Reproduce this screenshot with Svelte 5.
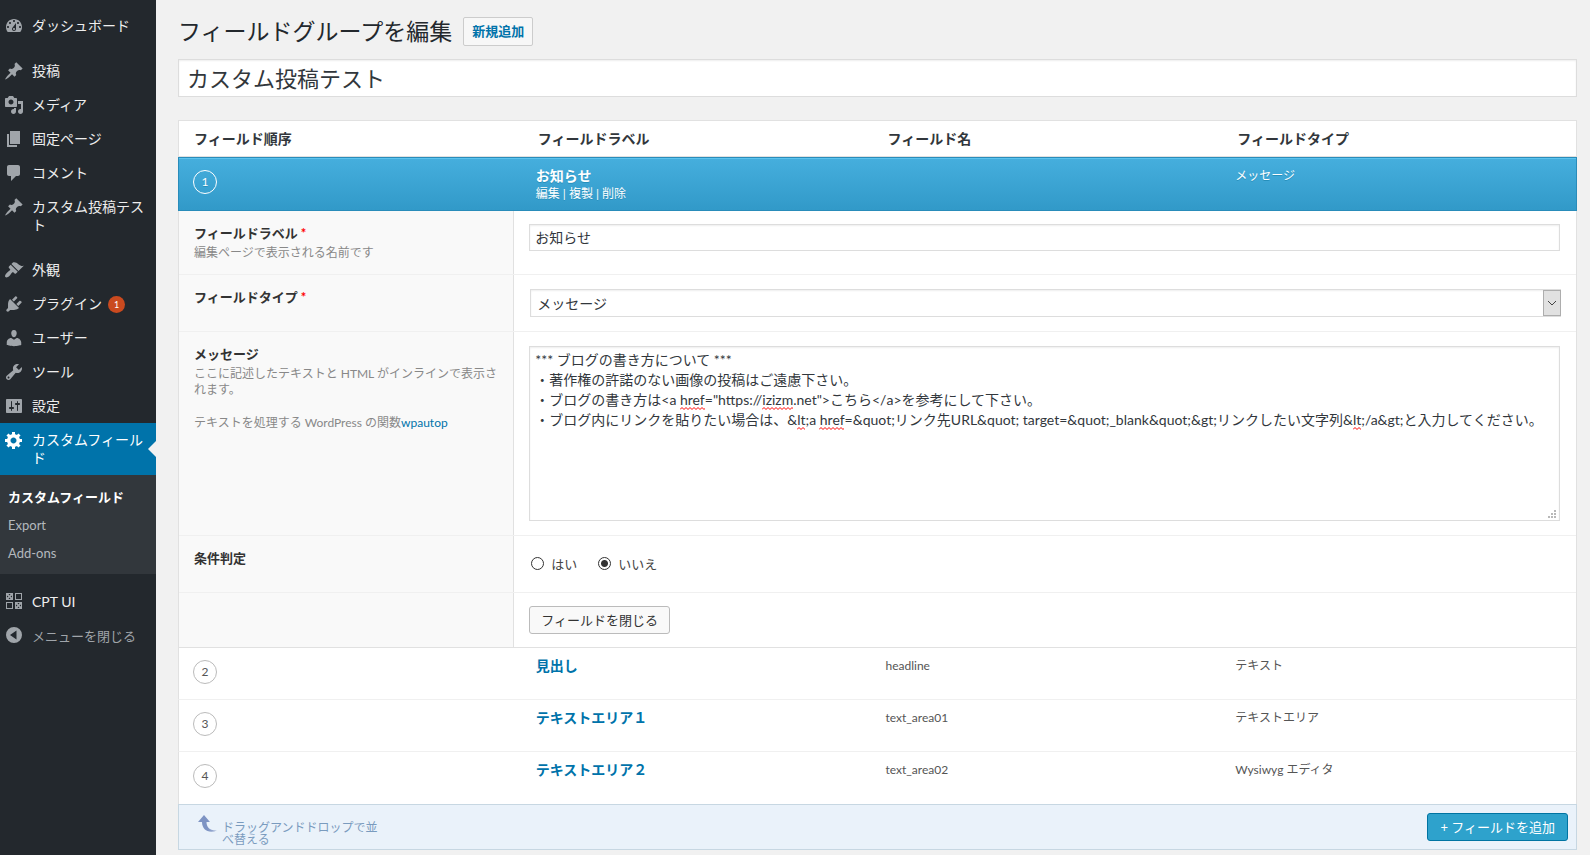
<script lang="ts">
  interface MenuItem {
    label?: string;
    icon?: string;
    badge?: number;
    current?: boolean;
    muted?: boolean;
    separator?: boolean;
  }

  const icons: Record<string, string> = {
    dashboard: 'M3.76 16h12.48c1.1-1.37 1.76-3.11 1.76-5 0-4.42-3.58-8-8-8s-8 3.58-8 8c0 1.89.66 3.63 1.76 5zM10 4c.55 0 1 .45 1 1s-.45 1-1 1-1-.45-1-1 .45-1 1-1zM6 6c.55 0 1 .45 1 1s-.45 1-1 1-1-.45-1-1 .45-1 1-1zm8 0c.55 0 1 .45 1 1s-.45 1-1 1-1-.45-1-1 .45-1 1-1zm-5.37 5.55L12 7v6c0 1.1-.9 2-2 2s-2-.9-2-2c0-.57.24-1.08.63-1.45zM4 10c.55 0 1 .45 1 1s-.45 1-1 1-1-.45-1-1 .45-1 1-1zm12 0c.55 0 1 .45 1 1s-.45 1-1 1-1-.45-1-1 .45-1 1-1zm-5 3c0-.55-.45-1-1-1s-1 .45-1 1 .45 1 1 1 1-.45 1-1z',
    post: 'M10.44 3.02l1.82-1.82 6.36 6.35-1.83 1.82c-1.05-.68-2.48-.57-3.41.36l-.75.75c-.92.93-1.04 2.35-.35 3.41l-1.83 1.82-2.41-2.41-2.8 2.79c-.42.42-3.38 2.71-3.8 2.29s1.86-3.39 2.28-3.81l2.79-2.79L4.1 9.36l1.83-1.82c1.05.69 2.48.57 3.4-.36l.75-.75c.93-.92 1.05-2.35.36-3.41z',
    media: 'M13 11V4c0-.55-.45-1-1-1h-1.67L9 1H5L3.67 3H2c-.55 0-1 .45-1 1v7c0 .55.45 1 1 1h10c.55 0 1-.45 1-1zM7 4.5c1.38 0 2.5 1.12 2.5 2.5S8.38 9.5 7 9.5 4.5 8.38 4.5 7 5.62 4.5 7 4.5zM14 6h5v10.5c0 1.38-1.12 2.5-2.5 2.5S14 17.88 14 16.5s1.12-2.5 2.5-2.5c.17 0 .34.02.5.05V9h-3V6zm-4 8.05V13h2v3.5c0 1.38-1.12 2.5-2.5 2.5S7 17.88 7 16.5 8.12 14 9.5 14c.17 0 .34.02.5.05z',
    page: 'M6 15V2h10v13H6zm-1 1h8v2H3V5h2v11z',
    comments: 'M5 2h9c1.1 0 2 .9 2 2v7c0 1.1-.9 2-2 2h-2l-5 5v-5H5c-1.1 0-2-.9-2-2V4c0-1.1.9-2 2-2z',
    appearance: 'M14.48 11.06L7.41 3.99l1.5-1.5c.5-.56 2.3-.47 3.51.32 1.21.8 1.43 1.28 2.91 2.1 1.18.64 2.45 1.26 4.45.85zm-.71.71L6.7 4.7 4.93 6.47c-.39.39-.39 1.02 0 1.41l1.06 1.06c.39.39.39 1.03 0 1.42-.6.6-1.43 1.11-2.21 1.69-.35.26-.7.53-1.01.84C1.43 14.23.4 16.08 1.4 17.07c.99 1 2.84-.03 4.18-1.36.31-.31.58-.66.85-1.02.57-.78 1.08-1.61 1.69-2.21.39-.39 1.02-.39 1.41 0l1.06 1.06c.39.39 1.02.39 1.41 0z',
    plugins: 'M13.11 4.36L9.87 7.6 8 5.73l3.24-3.24c.35-.34 1.05-.2 1.56.32.52.51.66 1.21.31 1.55zm-8 1.77l.91-1.12 9.01 9.01-1.19.84c-.71.71-2.63 1.16-3.82 1.16H6.14L4.9 17.26c-.59.59-1.54.59-2.12 0-.59-.58-.59-1.53 0-2.12l1.24-1.24v-3.88c0-1.13.4-3.19 1.09-3.89zm7.26 3.97l3.24-3.24c.34-.35 1.04-.21 1.55.31.52.51.66 1.21.31 1.55l-3.24 3.25z',
    users: 'M10 9.25c-2.27 0-2.73-3.44-2.73-3.44C7 4.02 7.82 2 9.97 2c2.16 0 2.98 2.02 2.71 3.81 0 0-.41 3.44-2.68 3.44zm0 2.57L12.72 10c2.39 0 4.52 2.33 4.52 4.53v2.49s-3.65 1.13-7.24 1.13c-3.65 0-7.24-1.13-7.24-1.13v-2.49c0-2.25 1.94-4.48 4.47-4.48z',
    tools: 'M16.68 9.77c-1.34 1.34-3.3 1.67-4.95.99l-5.41 6.52c-.99.99-2.59.99-3.58 0s-.99-2.59 0-3.57l6.52-5.42c-.68-1.65-.35-3.61.99-4.95 1.28-1.28 3.12-1.62 4.72-1.06l-2.89 2.89 2.82 2.82 2.86-2.87c.53 1.58.18 3.39-1.08 4.65zM3.81 16.21c.4.39 1.04.39 1.43 0 .4-.4.4-1.04 0-1.43-.39-.4-1.03-.4-1.43 0-.39.39-.39 1.03 0 1.43z',
    settings: 'M18 16V4c0-.55-.45-1-1-1H3c-.55 0-1 .45-1 1v12c0 .55.45 1 1 1h14c.55 0 1-.45 1-1zM8 11h1c.55 0 1 .45 1 1s-.45 1-1 1H8v1.5c0 .28-.22.5-.5.5s-.5-.22-.5-.5V13H6c-.55 0-1-.45-1-1s.45-1 1-1h1V5.5c0-.28.22-.5.5-.5s.5.22.5.5V11zm5-2h-1c-.55 0-1-.45-1-1s.45-1 1-1h1V5.5c0-.28.22-.5.5-.5s.5.22.5.5V7h1c.55 0 1 .45 1 1s-.45 1-1 1h-1v5.5c0 .28-.22.5-.5.5s-.5-.22-.5-.5V9z',
    generic: 'M18 12h-2.18c-.17.7-.44 1.35-.81 1.93l1.54 1.54-2.1 2.1-1.54-1.54c-.58.36-1.23.63-1.91.79V19H8v-2.18c-.68-.16-1.33-.43-1.91-.79l-1.54 1.54-2.12-2.12 1.54-1.54c-.36-.58-.63-1.23-.79-1.91H1V9.03h2.17c.16-.7.44-1.35.8-1.94L2.43 5.55l2.1-2.1 1.54 1.54c.58-.37 1.24-.64 1.93-.81V2h3v2.18c.68.16 1.33.43 1.91.79l1.54-1.54 2.12 2.12-1.54 1.54c.36.59.64 1.24.8 1.94H18V12zm-8.5 1.5c1.66 0 3-1.34 3-3s-1.34-3-3-3-3 1.34-3 3 1.34 3 3 3z',
    cptui: 'M2 1h7v7H2zM3 2v5h5V2zM11 1h7v7h-7zM12 2v5h5V2zM2 10h7v7H2zM3 11v5h5v-5zM11 10h7v7h-7zM12 11v5h5v-5zM3 2h1.500l1 1.500 1-1.500H8v1.500l-1.500 1L8 5.500V7H6.500l-1-1.500-1 1.500H3V5.500l1.500-1L3 3.500zM12 11h1.500l1 1.500 1-1.500H17v1.500l-1.500 1 1.500 1V16h-1.500l-1-1.500-1 1.500H12v-1.500l1.500-1-1.500-1z',
    collapse: 'M10 1a8 8 0 1 0 0 16 8 8 0 0 0 0-16zM12.500 4.500v9L6 9z',
  };

  const menu: MenuItem[] = [
    { label: 'ダッシュボード', icon: 'dashboard' },
    { separator: true },
    { label: '投稿', icon: 'post' },
    { label: 'メディア', icon: 'media' },
    { label: '固定ページ', icon: 'page' },
    { label: 'コメント', icon: 'comments' },
    { label: 'カスタム投稿テスト', icon: 'post' },
    { separator: true },
    { label: '外観', icon: 'appearance' },
    { label: 'プラグイン', icon: 'plugins', badge: 1 },
    { label: 'ユーザー', icon: 'users' },
    { label: 'ツール', icon: 'tools' },
    { label: '設定', icon: 'settings' },
    { label: 'カスタムフィールド', icon: 'generic', current: true },
    { separator: true },
    { label: 'CPT UI', icon: 'cptui' },
    { label: 'メニューを閉じる', icon: 'collapse', muted: true },
  ];

  const submenu = ['カスタムフィールド', 'Export', 'Add-ons'];

  const fields = [
    { order: 2, label: '見出し', name: 'headline', type: 'テキスト' },
    { order: 3, label: 'テキストエリア１', name: 'text_area01', type: 'テキストエリア' },
    { order: 4, label: 'テキストエリア２', name: 'text_area02', type: 'Wysiwyg エディタ' },
  ];

  let groupTitle = $state('カスタム投稿テスト');
  let fieldLabel = $state('お知らせ');
  let fieldType = $state('メッセージ');
  let conditional = $state('no');
  let message = $state(
    [
      '*** ブログの書き方について ***',
      '・著作権の許諾のない画像の投稿はご遠慮下さい。',
      '・ブログの書き方は<a href="https://izizm.net">こちら</a>を参考にして下さい。',
      '・ブログ内にリンクを貼りたい場合は、&lt;a href=&quot;リンク先URL&quot; target=&quot;_blank&quot;&gt;リンクしたい文字列&lt;/a&gt;と入力してください。',
    ].join('\n')
  );

  // Squiggles under the words the spell checker doesn't know
  const LINE_HEIGHT = 20;
  const ctx = document.createElement('canvas').getContext('2d')!;
  ctx.font = '14px Lato, "Noto Sans CJK JP", sans-serif';
  const measure = (s: string) => Math.round(ctx.measureText(s).width);

  let typos = $derived(
    message.split('\n').flatMap((line, row) =>
      [...line.matchAll(/href|izizm|lt(?=;)/g)].map((m) => ({
        left: 6 + measure(line.slice(0, m.index)),
        top: 1 + (row + 1) * LINE_HEIGHT,
        width: measure(m[0]),
      }))
    )
  );
</script>

<div class="admin">
  <nav class="sidebar">
    <ul class="menu">
      {#each menu as item}
        {#if item.separator}
          <li class="menu__separator"></li>
        {:else}
          <li>
            <a href="#menu" class="menu__item" class:current={item.current} class:muted={item.muted}>
              <svg class="menu__icon" width="20" height="20" viewBox="0 0 20 20" fill="currentColor" fill-rule="evenodd"><path d={icons[item.icon!]} /></svg>
              <span class="menu__label">{item.label}</span>
              {#if item.badge}<span class="badge">{item.badge}</span>{/if}
            </a>
            {#if item.current}
              <ul class="submenu">
                {#each submenu as sub, i}
                  <li><a href="#submenu" class:active={i === 0}>{sub}</a></li>
                {/each}
              </ul>
            {/if}
          </li>
        {/if}
      {/each}
    </ul>
  </nav>

  <main class="content">
    <header class="heading">
      <h1>フィールドグループを編集</h1>
      <a class="add-new" href="#new">新規追加</a>
    </header>

    <input class="title-input" type="text" aria-label="タイトル" bind:value={groupTitle} />

    <section>
      <table class="fields">
        <thead>
          <tr>
            <th>フィールド順序</th>
            <th>フィールドラベル</th>
            <th>フィールド名</th>
            <th>フィールドタイプ</th>
          </tr>
        </thead>
        <tbody>
          <tr class="row row--open">
            <td><span class="circle">1</span></td>
            <td>
              <a class="row__title" href="#field">お知らせ</a>
              <div class="row__actions"><a href="#edit">編集</a> | <a href="#copy">複製</a> | <a href="#delete">削除</a></div>
            </td>
            <td></td>
            <td>メッセージ</td>
          </tr>
          <tr>
            <td class="form" colspan="4">
              <div class="option">
                <div class="option__label">
                  <label for="field-label">フィールドラベル<span class="required">*</span></label>
                  <p>編集ページで表示される名前です</p>
                </div>
                <div class="option__value">
                  <input id="field-label" class="text" type="text" bind:value={fieldLabel} />
                </div>
              </div>
              <div class="option option--short">
                <div class="option__label">
                  <label for="field-type">フィールドタイプ<span class="required">*</span></label>
                </div>
                <div class="option__value">
                  <div class="select">
                    <select id="field-type" bind:value={fieldType}>
                      <option>メッセージ</option>
                    </select>
                    <span class="select__arrow"><svg width="10" height="6" viewBox="0 0 10 6" fill="none" stroke="#444"><path d="M1 1l4 4 4-4" /></svg></span>
                  </div>
                </div>
              </div>
              <div class="option">
                <div class="option__label">
                  <label for="message">メッセージ</label>
                  <p>ここに記述したテキストと HTML がインラインで表示されます。</p>
                  <p class="note">テキストを処理する WordPress の関数<a href="#wpautop">wpautop</a></p>
                </div>
                <div class="option__value">
                  <div class="editor">
                    <textarea id="message" spellcheck="false" bind:value={message}></textarea>
                    {#each typos as typo}
                      <svg class="editor__typo" height="3" style="left: {typo.left}px; top: {typo.top}px; width: {typo.width}px">
                        <path d="M0 2.500l2-2 2 2 2-2 2 2 2-2 2 2 2-2 2 2 2-2 2 2 2-2 2 2 2-2 2 2 2-2 2 2 2-2 2 2" fill="none" stroke="#f00" />
                      </svg>
                    {/each}
                    <svg class="editor__grip" width="8" height="8" viewBox="0 0 8 8" fill="#b8b8b8"><path d="M6 0h2v2H6zM3 3h2v2H3zM6 3h2v2H6zM0 6h2v2H0zM3 6h2v2H3zM6 6h2v2H6z" /></svg>
                  </div>
                </div>
              </div>
              <div class="option option--short">
                <div class="option__label"><span class="caption">条件判定</span></div>
                <div class="option__value option__value--radios">
                  <label><input type="radio" name="conditional" value="yes" bind:group={conditional} />はい</label>
                  <label><input type="radio" name="conditional" value="no" bind:group={conditional} />いいえ</label>
                </div>
              </div>
              <div class="option option--last">
                <div class="option__label"></div>
                <div class="option__value">
                  <button class="button" type="button">フィールドを閉じる</button>
                </div>
              </div>
            </td>
          </tr>
          {#each fields as field}
            <tr class="row">
              <td><span class="circle">{field.order}</span></td>
              <td><a class="row__title" href="#field">{field.label}</a></td>
              <td>{field.name}</td>
              <td>{field.type}</td>
            </tr>
          {/each}
        </tbody>
      </table>
      <footer class="table-footer">
        <svg class="drag-arrow" width="20" height="18" viewBox="0 0 20 18">
          <defs>
            <linearGradient id="fade" x1="0" y1="0" x2="1" y2="0">
              <stop offset="0.500" stop-color="#7d93c3" />
              <stop offset="1" stop-color="#7d93c3" stop-opacity="0.600" />
            </linearGradient>
          </defs>
          <path fill="url(#fade)" d="M6 0l6 7H8.500c0 5 3 9 10.500 8.500C11 19 4 15 4 7H0z" />
        </svg>
        <p>ドラッグアンドドロップで並べ替える</p>
        <button class="button button--primary" type="button">+ フィールドを追加</button>
      </footer>
    </section>
  </main>
</div>

<style>
  :global(body) { margin: 0; background: #f1f1f1; }
  .admin {
    display: flex; min-height: 100vh;
    font-family: Lato, "Noto Sans CJK JP", sans-serif; font-size: 13px; color: #444;
  }
  .admin, .admin * { box-sizing: border-box; }
  a { color: #0073aa; text-decoration: none; }
  p, h1 { margin: 0; }
  ul { margin: 0; padding: 0; list-style: none; }
  input, select, textarea, button { font-family: inherit; color: #32373c; }

  .sidebar { flex: 0 0 156px; background: #23282d; }
  .menu { padding-top: 9px; }
  .menu__separator { height: 11px; }
  .menu__item {
    position: relative; display: flex; padding: 7px 8px 7px 4px;
    font-size: 14px; line-height: 18px; color: #eee;
  }
  .menu__icon { flex: none; margin-right: 8px; color: #a0a5aa; }
  .menu__label { padding: 1px 0; }
  .menu__item.current { background: #0073aa; color: #fff; }
  .menu__item.current .menu__icon { color: #fff; }
  .menu__item.current::after {
    content: ""; position: absolute; right: 0; top: 18px;
    border: 8px solid transparent; border-right-color: #f1f1f1; border-left: 0;
  }
  .menu__item.muted { font-size: 13px; color: #a0a5aa; }
  .badge {
    align-self: center; margin-left: 6px; width: 17px; border-radius: 9px;
    background: #ca4a1f; color: #fff; font-size: 9px; line-height: 17px; text-align: center;
  }
  .submenu { padding: 8px 0 7px; background: #32373c; }
  .submenu a { display: block; padding: 5px 8px; font-size: 13px; line-height: 18px; color: #b4b9be; }
  .submenu a.active { color: #fff; font-weight: 700; }

  .content { flex: 1; min-width: 0; padding: 16px 13px 4px 22px; }
  .heading { display: flex; align-items: center; gap: 11px; }
  h1 { font-size: 23px; font-weight: 400; line-height: 30px; color: #23282d; }
  .add-new {
    padding: 4px 8px; border: 1px solid #ccc; border-radius: 2px; background: #f7f7f7;
    font-size: 13px; font-weight: 700; line-height: 19px;
  }
  .title-input {
    display: block; width: 100%; height: 38px; margin: 13px 0 23px; padding: 0 8px 3px;
    border: 1px solid #ddd; background: #fff; box-shadow: inset 0 1px 2px rgba(0, 0, 0, 0.07);
    font-size: 22px;
  }

  .fields { width: 100%; table-layout: fixed; border-collapse: separate; border-spacing: 0; background: #fff; }
  th {
    height: 37px; padding: 0 10px; border: solid #e1e1e1; border-width: 1px 0;
    font-size: 14px; font-weight: 700; line-height: 18px; text-align: left; color: #32373c;
  }
  th:first-child { padding-left: 15px; border-left-width: 1px; }
  th:last-child { border-right-width: 1px; }
  .row td {
    height: 52px; padding: 9px 8px 0; border: 0 solid #e1e1e1; border-bottom: 1px solid #f0f0f0;
    vertical-align: top; font-size: 12px; line-height: 18px; color: #555;
  }
  .row td:first-child { padding: 12px 0 0 14px; border-left-width: 1px; }
  .row td:last-child { border-right-width: 1px; }
  .row:last-child td { border-bottom: 0; }
  .circle {
    display: block; width: 24px; border: 1px solid #bbb; border-radius: 12px;
    font-size: 12px; line-height: 22px; text-align: center;
  }
  .row__title { display: block; font-size: 14px; font-weight: 700; }
  .row__actions { line-height: 17px; }
  .row--open { background: linear-gradient(#46afde, #3199c8); }
  .row--open td {
    height: 54px; border-color: #298cba; border-top: 1px solid #298cba; border-bottom-color: #298cba;
    box-shadow: inset 0 1px 0 #5cc3ee; color: #fff; text-shadow: 0 1px 0 #268fbb;
  }
  .row--open a { color: #fff; }
  .row--open .circle { border-color: #fff; }

  .form { padding: 0; border: 1px solid #e1e1e1; border-top: 0; }
  .option { display: flex; border-bottom: 1px solid #f0f0f0; }
  .option:last-child { border-bottom: 0; }
  .option__label {
    flex: 0 0 24%; padding: 12px 15px; border-right: 1px solid #e1e1e1; background: #f9f9f9;
    font-size: 12px; line-height: 16px; color: #888;
  }
  .option__label label, .caption {
    display: block; padding-bottom: 2px; font-size: 13px; font-weight: 700; line-height: 20px; color: #333;
  }
  .option__label .note { padding-top: 17px; }
  .required { margin-left: 3px; color: #f00; }
  .option__value { flex: 1; min-width: 0; padding: 13px 16px 14px 15px; }
  .option:first-child .option__value { padding-bottom: 23px; }
  .option--short { min-height: 57px; }
  .option--last .option__value { padding-bottom: 13px; }
  .text, .select select, textarea {
    display: block; width: 100%; border: 1px solid #ddd; border-radius: 0; background: #fff;
    box-shadow: inset 0 1px 2px rgba(0, 0, 0, 0.07); font-size: 14px;
  }
  .text { height: 27px; padding: 2px 5px 4px; }
  .select { position: relative; margin: 1px -1px 0 1px; }
  .select select { height: 28px; padding: 0 24px 0 6px; appearance: none; }
  .select__arrow {
    position: absolute; top: 1px; right: 0; bottom: 1px; width: 18px;
    display: flex; align-items: center; justify-content: center;
    border: 1px solid #adadad; background: #e1e1e1; pointer-events: none;
  }
  .editor { position: relative; margin-top: 1px; }
  textarea {
    height: 175px; margin: 0; padding: 3px 5px;
    line-height: 20px; resize: none; outline: 0; overflow: hidden;
  }
  .editor__typo { position: absolute; overflow: hidden; pointer-events: none; }
  .editor__grip { position: absolute; right: 4px; bottom: 3px; }
  .option__value--radios { display: flex; align-items: center; gap: 19px; }
  .option__value--radios label { display: flex; align-items: center; gap: 7px; }
  input[type="radio"] {
    appearance: none; width: 13px; height: 13px; margin: 0 0 0 2px; border: 1px solid #333;
    border-radius: 50%; background: #fff;
  }
  input[type="radio"]:checked { background: radial-gradient(circle, #333 3px, #fff 4px); }
  .button {
    height: 28px; padding: 0 11px; border: 1px solid #bbb; border-radius: 3px; background: #f9f9f9;
    font-size: 13px; line-height: 26px; color: #333;
  }
  .button--primary { margin-left: auto; padding: 0 12px; border-color: #0074a2; background: #2ea2cc; color: #fff; }

  .table-footer {
    display: flex; align-items: flex-start; height: 46px; padding: 8px;
    border: 1px solid #c7d7e2; background: #eaf2fa;
  }
  .drag-arrow { margin: 2px 4px 0 11px; }
  .table-footer p { width: 160px; padding-top: 9px; font-size: 12px; line-height: 12px; color: #7a9bbe; }
</style>
